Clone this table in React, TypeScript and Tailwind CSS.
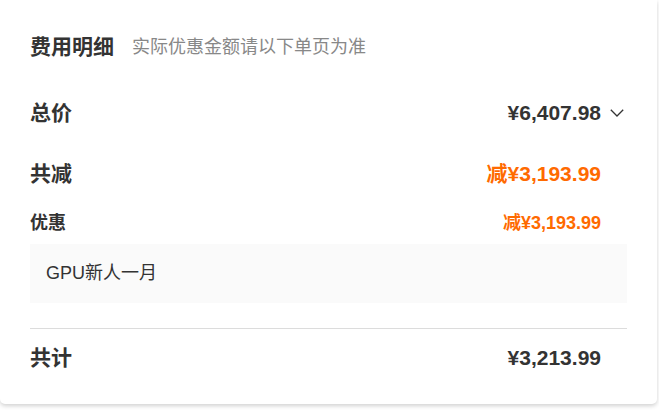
import { ReactNode } from "react";

const font = { fontFamily: '"Liberation Sans", "Noto Sans CJK SC", sans-serif' };

function Row({
  label,
  value,
  className = "",
  extra,
}: {
  label: ReactNode;
  value: ReactNode;
  className?: string;
  extra?: ReactNode;
}) {
  return (
    <div className={`flex items-center justify-between ${className}`}>
      <span>{label}</span>
      <div className="flex items-center">
        <span>{value}</span>
        <div className="flex w-[26px] justify-end pr-[3px]">{extra}</div>
      </div>
    </div>
  );
}

export default function App() {
  return (
    <div className="h-[410px] w-[659px] bg-white" style={font}>
      <div className="h-[404px] w-[657px] rounded-b-[5px] bg-white px-[30px] pt-[33px] text-[#333] shadow-[0_2px_4px_rgba(0,0,0,0.18)]">
        <div className="flex items-center leading-[28px]">
          <span className="text-[21px] font-bold">费用明细</span>
          <span className="ml-[18px] text-[18px] text-[#888]">实际优惠金额请以下单页为准</span>
        </div>

        <Row
          className="mt-[38px] h-[28px] text-[21px] font-bold"
          label="总价"
          value="¥6,407.98"
          extra={
            <svg width="14" height="8" viewBox="0 0 14 8" fill="none">
              <path d="M0.8 0.8 L7 7 L13.2 0.8" stroke="#333" strokeWidth="1.3" />
            </svg>
          }
        />

        <Row
          className="mt-[33px] h-[28px] text-[21px] font-bold"
          label="共减"
          value={<span className="text-[#ff6a00]">减¥3,193.99</span>}
        />

        <Row
          className="mt-[23px] h-[24px] text-[18px] font-bold"
          label="优惠"
          value={<span className="text-[#ff6a00]">减¥3,193.99</span>}
        />

        <div className="mt-[9px] flex h-[59px] items-center bg-[#fafafa] px-[16px] text-[18px] text-[#333]">
          GPU新人一月
        </div>

        <div className="mt-[25px] h-px bg-[#dcdcdc]" />

        <Row
          className="mt-[15px] h-[28px] text-[21px] font-bold"
          label="共计"
          value="¥3,213.99"
        />
      </div>
    </div>
  );
}
